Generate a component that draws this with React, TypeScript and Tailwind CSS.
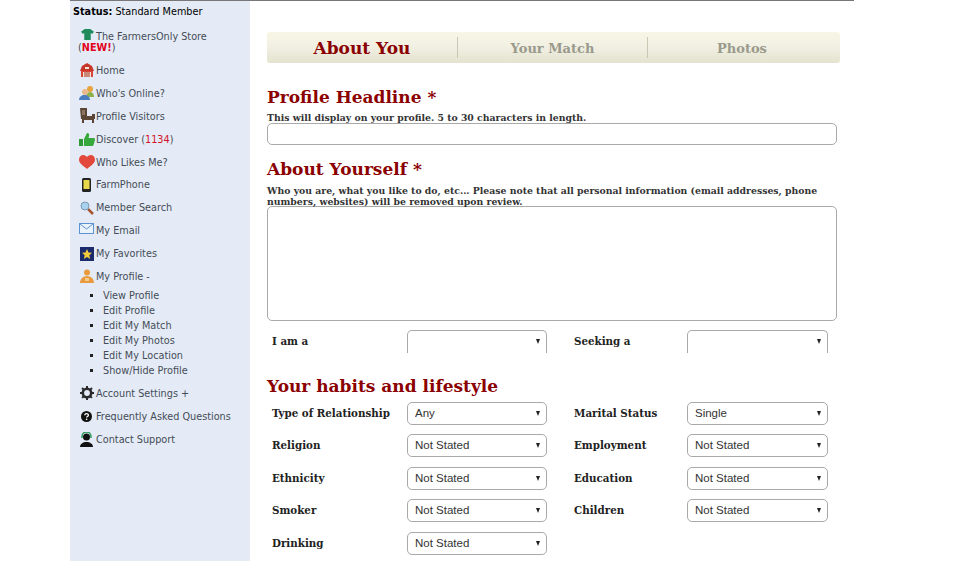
const slab = "font-['DejaVu_Serif','Liberation_Serif',serif]";

function Shirt() {
  return (
    <svg width="13" height="13" viewBox="0 0 14 14">
      <path d="M4 1h6l4 3-2 2.500-1.500-1V13h-7V5.500L2 6.500 0 4z" fill="#1f8a5b" />
    </svg>
  );
}
function Barn() {
  return (
    <svg width="16" height="14" viewBox="0 0 16 14">
      <path d="M8 0l5 3 2 5H1l2-5z" fill="#c8352b" />
      <rect x="2" y="8" width="12" height="6" fill="#d8443a" />
      <rect x="4" y="9" width="8" height="5" fill="#f2e6d0" />
      <path d="M6 9v5M8 9v5M10 9v5" stroke="#a32a22" />
      <rect x="6" y="4" width="4" height="2" fill="#f2e6d0" />
    </svg>
  );
}
function People() {
  return (
    <svg width="16" height="16" viewBox="0 0 16 16">
      <circle cx="11" cy="4" r="3" fill="#e8a33a" />
      <path d="M7 12c0-3 2-5 4-5s4 2 4 4v1z" fill="#8fb04a" />
      <circle cx="6" cy="7" r="3" fill="#e9b98c" />
      <path d="M0 15c0-3 2.500-5 5.500-5s5.500 2 5.500 5z" fill="#4a7cc0" />
    </svg>
  );
}
function Chair() {
  return (
    <svg width="16" height="16" viewBox="0 0 16 16">
      <path d="M1 0h7v8h5V6h3v5h-1v4h-2v-3H5v3H3v-4H2z" fill="#5b4636" />
      <rect x="3" y="2" width="3" height="5" fill="#8a7360" />
    </svg>
  );
}
function Thumb() {
  return (
    <svg width="16" height="15" viewBox="0 0 16 15">
      <rect x="0" y="7" width="4" height="7" fill="#2f9a35" />
      <path d="M5 7l3-6c2 0 2.500 1.500 2 3l-.5 2H15c1 0 1 1 1 2l-1.500 5c-.3 1-1 1-2 1H5z" fill="#36a83c" />
    </svg>
  );
}
function Heart() {
  return (
    <svg width="16" height="14" viewBox="0 0 16 14">
      <path d="M8 14C3 10 0 8 0 4.500 0 2 2 0 4.200 0 6 0 7.200 1 8 2c.8-1 2-2 3.800-2C14 0 16 2 16 4.500 16 8 13 10 8 14z" fill="#e2493c" />
    </svg>
  );
}
function Phone() {
  return (
    <svg width="9" height="14" viewBox="0 0 9 14">
      <rect width="9" height="14" rx="1.500" fill="#222" />
      <rect x="1.500" y="2" width="6" height="9" fill="#e9d94a" />
    </svg>
  );
}
function Search() {
  return (
    <svg width="14" height="14" viewBox="0 0 14 14">
      <path d="M8 8l5 5" stroke="#a8562f" strokeWidth="2.500" />
      <circle cx="5" cy="5" r="4" fill="#a9d2ee" stroke="#7a9ab5" />
    </svg>
  );
}
function Mail() {
  return (
    <svg className="-translate-y-[2px]" width="15" height="11" viewBox="0 0 15 11">
      <rect x=".5" y=".5" width="14" height="10" fill="#eaf3fb" stroke="#5c93d0" />
      <path d="M1 1l6.500 5L14 1" fill="none" stroke="#5c93d0" />
    </svg>
  );
}
function Star() {
  return (
    <svg width="14" height="14" viewBox="0 0 14 14">
      <rect width="14" height="14" fill="#1b2a6b" />
      <path d="M7 2l1.500 3.500 3.500.3-2.700 2.400.9 3.800L7 10l-3.200 2 .9-3.800L2 5.800l3.500-.3z" fill="#f4cb3a" />
    </svg>
  );
}
function Person() {
  return (
    <svg width="14" height="14" viewBox="0 0 14 14">
      <circle cx="7" cy="3.500" r="3" fill="#e89a3c" />
      <path d="M0 14c0-4 3-7 7-7s7 3 7 7z" fill="#e89a3c" />
      <path d="M5 9h4v3H5z" fill="#f4c98c" />
    </svg>
  );
}
function Gear() {
  return (
    <svg width="14" height="14" viewBox="0 0 14 14">
      <circle cx="7" cy="7" r="4.200" fill="none" stroke="#2b2b2b" strokeWidth="2.600" />
      <path d="M7 0v14M0 7h14M2 2l10 10M12 2L2 12" stroke="#2b2b2b" strokeWidth="2" strokeDasharray="2 10" />
    </svg>
  );
}
function Help() {
  return (
    <svg width="11" height="11" viewBox="0 0 11 11">
      <circle cx="5.500" cy="5.500" r="5.500" fill="#111" />
      <path d="M3.800 4.200c0-2.200 3.600-2.200 3.600 0 0 1.300-1.800 1.200-1.800 2.400" fill="none" stroke="#fff" strokeWidth="1.300" />
      <rect x="4.900" y="7.600" width="1.400" height="1.400" fill="#fff" />
    </svg>
  );
}
function Agent() {
  return (
    <svg width="13" height="15" viewBox="0 0 13 15">
      <circle cx="6.500" cy="5" r="3.500" fill="#111" />
      <path d="M2 6V4.500a4.500 4.500 0 019 0V6" fill="none" stroke="#2c9a5b" strokeWidth="1.500" />
      <path d="M0 15c0-3 3-5 6.500-5s6.500 2 6.500 5z" fill="#111" />
    </svg>
  );
}

function NavRow({ icon, children }: { icon: React.ReactNode; children: React.ReactNode }) {
  return (
    <div className="flex items-center h-[22.9px] pl-[7px]">
      <span className="flex w-[19px] justify-center">{icon}</span>
      <span className="whitespace-nowrap">{children}</span>
    </div>
  );
}

function Sidebar() {
  const subs = ["View Profile", "Edit Profile", "Edit My Match", "Edit My Photos", "Edit My Location", "Show/Hide Profile"];
  return (
    <aside className="w-[180px] shrink-0 bg-[#e4ebf6] pt-[5px] text-[9.7px] leading-[11px] text-[#444b57] font-['DejaVu_Sans','Liberation_Sans',sans-serif]">
      <div className="h-[12px] pl-[3px] text-black"><b>Status:</b> Standard Member</div>
      <div className="pl-[8px] mt-[13px] h-[24px]">
        <div className="flex items-center h-[11px]">
          <span className="flex w-[18px] -translate-y-[2px] justify-center"><Shirt /></span>
          <span className="whitespace-nowrap">The FarmersOnly Store</span>
        </div>
        <div>(<b className="text-[#e3001b]">NEW!</b>)</div>
      </div>
      <div className="mt-[4px]">
        <NavRow icon={<Barn />}>Home</NavRow>
        <NavRow icon={<People />}>Who's Online?</NavRow>
        <NavRow icon={<Chair />}>Profile Visitors</NavRow>
        <NavRow icon={<Thumb />}>Discover (<span className="text-[#d3122a]">1134</span>)</NavRow>
        <NavRow icon={<Heart />}>Who Likes Me?</NavRow>
        <NavRow icon={<Phone />}>FarmPhone</NavRow>
        <NavRow icon={<Search />}>Member Search</NavRow>
        <NavRow icon={<Mail />}>My Email</NavRow>
        <NavRow icon={<Star />}>My Favorites</NavRow>
        <NavRow icon={<Person />}>My Profile -</NavRow>
      </div>
      <ul className="pl-[20px] pb-[4px]">
        {subs.map((s) => (
          <li key={s} className="flex items-center h-[15px]">
            <span className="w-[3px] h-[3px] bg-[#222] mr-[10px]" />
            {s}
          </li>
        ))}
      </ul>
      <NavRow icon={<Gear />}>Account Settings +</NavRow>
      <NavRow icon={<Help />}>Frequently Asked Questions</NavRow>
      <NavRow icon={<Agent />}>Contact Support</NavRow>
    </aside>
  );
}

function Tabs() {
  return (
    <div className={`flex w-[573px] h-[31px] rounded-[3px] bg-gradient-to-b from-[#f8f7e6] via-[#f0efe2] to-[#e4e3cf] ${slab} font-bold`}>
      <div className="flex w-[190px] items-center justify-center pt-[2px] text-[17px] text-[#8b0000]">About You</div>
      <div className="my-[5px] w-px bg-[#c9c8b4]" />
      <div className="flex w-[189px] items-center justify-center pt-[2px] text-[13px] text-[#9a9a8c]">Your Match</div>
      <div className="my-[5px] w-px bg-[#c9c8b4]" />
      <div className="flex flex-1 items-center justify-center pt-[2px] pr-[4px] text-[13px] text-[#9a9a8c]">Photos</div>
    </div>
  );
}

function Sel({ value, w, noBottom }: { value: string; w: string; noBottom?: boolean }) {
  return (
    <div className={`relative ${w} h-[23px] shrink-0`}>
      <select
        defaultValue={value}
        className={`h-full w-full appearance-none rounded-[5px] border border-[#a9a9a9] bg-white pl-[7px] text-[11.5px] font-normal text-[#333] font-['Liberation_Sans',sans-serif] ${noBottom ? "rounded-b-none border-b-0" : ""}`}
      >
        <option>{value}</option>
      </select>
      <span className="absolute right-[7px] top-[9px] h-0 w-0 border-x-[2.5px] border-t-[5px] border-x-transparent border-t-[#222]" />
    </div>
  );
}

function Row({ l, lv, r, rv, h, noBottom }: { l: string; lv: string; r?: string; rv?: string; h: string; noBottom?: boolean }) {
  return (
    <div className={`flex items-center ${h} pl-[5px] text-[10.3px] font-bold text-[#222] ${slab}`}>
      <span className="w-[135px] shrink-0 whitespace-nowrap pt-[1px]">{l}</span>
      <Sel value={lv} w="w-[140px]" noBottom={noBottom} />
      {r && (
        <>
          <span className="ml-[27px] w-[113px] shrink-0 whitespace-nowrap pt-[1px]">{r}</span>
          <Sel value={rv ?? ""} w="w-[141px]" noBottom={noBottom} />
        </>
      )}
    </div>
  );
}

export default function App() {
  const rowH = "h-[32.5px]";
  return (
    <div className="h-[561px] w-[960px] overflow-hidden bg-white">
      <div className="ml-[70px] flex h-full w-[784px] items-stretch border-t border-[#777]">
        <Sidebar />
        <main className="flex-1 pl-[17px] pt-[31px]">
          <Tabs />
          <h2 className={`mt-[24px] h-[21px] text-[17px] leading-[21px] font-bold text-[#8b0000] ${slab}`}>Profile Headline *</h2>
          <p className={`mt-[4px] h-[11px] text-[9.3px] leading-[11px] font-bold text-[#333] ${slab}`}>This will display on your profile. 5 to 30 characters in length.</p>
          <input className="block h-[22px] w-[570px] rounded-[5px] border border-[#a9a9a9] bg-white" />
          <h2 className={`mt-[14px] h-[21px] text-[17px] leading-[21px] font-bold text-[#8b0000] ${slab}`}>About Yourself *</h2>
          <p className={`mt-[5px] h-[21px] w-[570px] text-[9.3px] leading-[11px] font-bold text-[#333] ${slab}`}>
            Who you are, what you like to do, etc... Please note that all personal information (email addresses, phone numbers, websites) will be removed upon review.
          </p>
          <textarea className="block h-[115px] w-[570px] resize-none rounded-[5px] border border-[#a9a9a9] bg-white" />
          <Row l="I am a" lv="" r="Seeking a" rv="" h="h-[40px]" noBottom />
          <h2 className={`mt-[14.9px] h-[20px] text-[17px] leading-[20px] font-bold text-[#8b0000] ${slab}`}>Your habits and lifestyle</h2>
          <div className="mt-[1px]">
            <Row l="Type of Relationship" lv="Any" r="Marital Status" rv="Single" h={rowH} />
            <Row l="Religion" lv="Not Stated" r="Employment" rv="Not Stated" h={rowH} />
            <Row l="Ethnicity" lv="Not Stated" r="Education" rv="Not Stated" h={rowH} />
            <Row l="Smoker" lv="Not Stated" r="Children" rv="Not Stated" h={rowH} />
            <Row l="Drinking" lv="Not Stated" h={rowH} />
          </div>
        </main>
      </div>
    </div>
  );
}
